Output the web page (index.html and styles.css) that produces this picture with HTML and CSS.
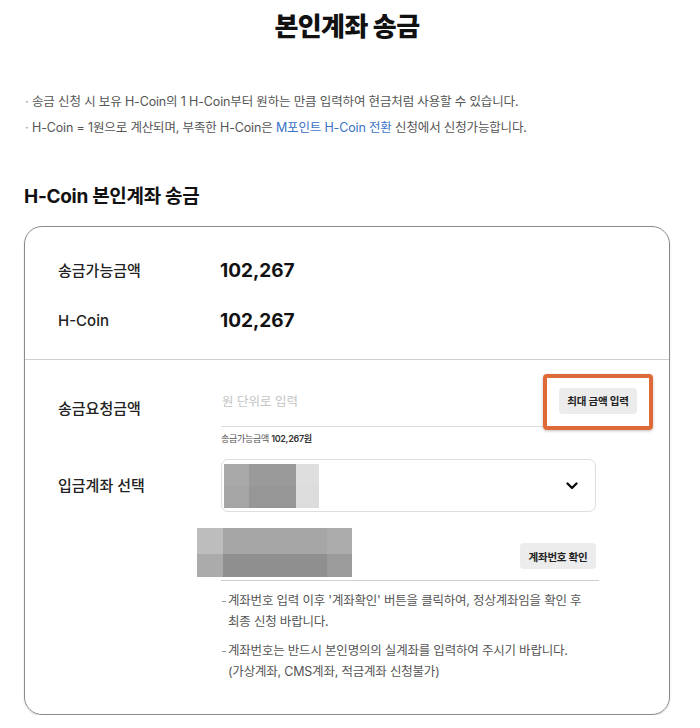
FILE: index.html
```html
<!DOCTYPE html>
<html lang="ko">
<head>
<meta charset="utf-8">
<title>본인계좌 송금</title>
<link rel="stylesheet" href="styles.css">
</head>
<body>
<div class="page">
  <h1 class="title">본인계좌 송금</h1>
  <ul class="notice">
    <li>송금 신청 시 보유 H-Coin의 1 H-Coin부터 원하는 만큼 입력하여 현금처럼 사용할 수 있습니다.</li>
    <li>H-Coin = 1원으로 계산되며, 부족한 H-Coin은 <a class="link">M포인트 H-Coin 전환</a> 신청에서 신청가능합니다.</li>
  </ul>
  <h2 class="section-title">H-Coin 본인계좌 송금</h2>
  <div class="card">
    <dl class="summary">
      <dt>송금가능금액</dt><dd>102,267</dd>
      <dt>H-Coin</dt><dd>102,267</dd>
    </dl>
    <div class="form">
      <div class="form-row row-amount">
        <span class="form-label">송금요청금액</span>
        <div class="field">
          <div class="amount-input">
            <span class="placeholder">원 단위로 입력</span>
            <span class="chip-wrap"><button class="chip">최대 금액 입력</button></span>
          </div>
          <p class="hint">송금가능금액 <b>102,267원</b></p>
        </div>
      </div>
      <div class="form-row row-select">
        <span class="form-label">입금계좌 선택</span>
        <div class="select">
          <div class="mosaic mosaic-bank">
            <i class="m1"></i><i class="m2"></i><i class="m3"></i>
            <i class="m4"></i><i class="m5"></i><i class="m6"></i>
          </div>
          <svg class="chevron" width="12" height="8" viewBox="0 0 12 8"><path d="M1.5 1.5 L6 6 L10.5 1.5" fill="none" stroke="#111" stroke-width="2.4" stroke-linecap="round" stroke-linejoin="round"/></svg>
        </div>
      </div>
      <div class="account-row">
        <div class="mosaic mosaic-account">
          <i class="a1"></i><i class="a2"></i><i class="a3"></i>
          <i class="a4"></i><i class="a5"></i><i class="a6"></i>
        </div>
        <button class="chip chip-account">계좌번호 확인</button>
      </div>
      <ul class="notes">
        <li>계좌번호 입력 이후 '계좌확인' 버튼을 클릭하여, 정상계좌임을 확인 후<br>최종 신청 바랍니다.</li>
        <li>계좌번호는 반드시 본인명의의 실계좌를 입력하여 주시기 바랍니다.<br>(가상계좌, CMS계좌, 적금계좌 신청불가)</li>
      </ul>
    </div>
  </div>
</div>
</body>
</html>
```

FILE: styles.css
```css
* { box-sizing: border-box; }
html, body { margin: 0; padding: 0; background: #fff; }
body {
  font-family: Inter, "Noto Sans CJK KR", sans-serif;
  color: #222;
}
.page {
  width: 700px;
  padding: 0 30px 0 24px;
}
.title {
  margin: 10px 0 0;
  font-size: 26px;
  line-height: 34px;
  font-weight: 800;
  text-align: center;
  letter-spacing: -0.6px;
  color: #111;
}
.notice {
  list-style: none;
  margin: 45px 0 0;
  padding: 0;
  font-size: 12.5px;
  line-height: 26px;
  color: #555;
  letter-spacing: -0.15px;
}
.notice li { white-space: nowrap; }
.notice li::before {
  content: "·";
  display: inline-block;
  width: 7px;
  margin-left: 1px;
  color: #999;
}
.link { color: #3a72c4; text-decoration: none; }
.section-title {
  margin: 43px 0 0;
  font-size: 19px;
  line-height: 26px;
  font-weight: 700;
  letter-spacing: -0.3px;
  color: #111;
}
.card {
  margin-top: 16px;
  width: 646px;
  border: 1.5px solid #8a8a8a;
  border-radius: 18px;
  box-shadow: 0 1px 2px rgba(0,0,0,0.15);
}
.summary {
  display: grid;
  grid-template-columns: 162px 1fr;
  row-gap: 26px;
  margin: 0;
  padding: 32px 0 26px 33px;
  line-height: 24px;
}
.summary dt { font-size: 15px; font-weight: 500; color: #222; }
.summary dd { margin: 0; font-size: 19px; font-weight: 700; color: #111; }
.form {
  border-top: 1px solid #cfcfcf;
  padding: 28px 0 32px 33px;
}
.form-row {
  display: grid;
  grid-template-columns: 163px 1fr;
}
.form-label {
  font-size: 15px;
  font-weight: 500;
  line-height: 20px;
  color: #222;
}
.row-amount .form-label { padding-top: 11px; }
.amount-input {
  width: 428px;
  height: 39px;
  padding-bottom: 13px;
  border-bottom: 1px solid #dcdcdc;
  display: flex;
  align-items: center;
  justify-content: space-between;
}
.placeholder {
  font-size: 12.5px;
  color: #c4c4c4;
  padding-left: 1px;
}
.chip-wrap {
  position: relative;
  margin-right: 12px;
  display: flex;
}
.chip-wrap::after {
  content: "";
  position: absolute;
  top: -14px;
  bottom: -16px;
  left: -16px;
  right: -16px;
  border: 4px solid #dd6a37;
  border-radius: 4px;
  box-shadow: 0 1px 3px rgba(0,0,0,0.25);
  pointer-events: none;
}
.chip {
  font-family: inherit;
  border: 0;
  border-radius: 4px;
  background: #ececec;
  font-size: 10.5px;
  font-weight: 700;
  color: #222;
  height: 26px;
  padding: 0 8px;
  letter-spacing: -0.2px;
}
.chip-wrap .chip { width: 78px; padding: 0; }
.hint {
  margin: 6px 0 0;
  font-size: 9px;
  line-height: 12px;
  color: #555;
  letter-spacing: -0.3px;
}
.hint b { font-weight: 600; color: #333; }
.row-select {
  margin-top: 14px;
  align-items: center;
}
.select {
  width: 375px;
  height: 53px;
  border: 1px solid #dedede;
  border-radius: 7px;
  display: flex;
  align-items: center;
  justify-content: space-between;
  padding: 0 17px 0 2px;
}
.mosaic { display: grid; }
.mosaic i { display: block; }
.mosaic-bank {
  grid-template-columns: 25px 47px 23px;
  grid-template-rows: 22px 22px;
}
.m1 { background: #a9a9a9; }
.m2 { background: #9a9a9a; }
.m3 { background: #dedede; }
.m4 { background: #a5a5a5; }
.m5 { background: #969696; }
.m6 { background: #dcdcdc; }
.chevron { display: block; }
.account-row {
  margin: 16px 0 0 163px;
  width: 378px;
  display: flex;
  align-items: flex-end;
  justify-content: space-between;
  padding-bottom: 3px;
  border-bottom: 1px solid #cfcfcf;
}
.mosaic-account {
  margin-left: -24px;
  grid-template-columns: 26px 104px 25px;
  grid-template-rows: 26px 23px;
}
.a1 { background: #bdbdbd; }
.a2 { background: #a6a6a6; }
.a3 { background: #acacac; }
.a4 { background: #ababab; }
.a5 { background: #8f8f8f; }
.a6 { background: #9b9b9b; }
.chip-account { margin: 0 3px 8px 0; width: 76px; padding: 0; }
.notes {
  list-style: none;
  margin: 9px 0 0 163px;
  padding: 0;
  font-size: 12.5px;
  line-height: 21px;
  color: #555;
  letter-spacing: -0.2px;
}
.notes li {
  position: relative;
  padding-left: 7px;
  white-space: nowrap;
}
.notes li + li { margin-top: 8px; }
.notes li::before {
  content: "-";
  position: absolute;
  left: 0;
  top: 0;
  color: #999;
}
```
